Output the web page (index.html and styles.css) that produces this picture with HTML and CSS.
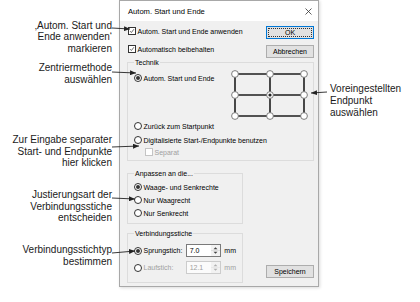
FILE: index.html
```html
<!DOCTYPE html>
<html lang="de">
<head>
    <meta charset="UTF-8">
    <title>Autom. Start und Ende</title>
    <link rel="stylesheet" href="styles.css">
</head>
<body>
    <div class="page">
        <div class="notes-left">
            <p class="note note-1">‚Autom. Start und<br>Ende anwenden‘<br>markieren</p>
            <p class="note note-2">Zentriermethode<br>auswählen</p>
            <p class="note note-3">Zur Eingabe separater<br>Start- und Endpunkte<br>hier klicken</p>
            <p class="note note-4">Justierungsart der<br>Verbindungsstiche<br>entscheiden</p>
            <p class="note note-5">Verbindungsstichtyp<br>bestimmen</p>
        </div>

        <div class="dialog">
            <div class="titlebar">
                <span>Autom. Start und Ende</span>
                <svg class="close" viewBox="0 0 7 7" width="7" height="7"><path d="M0.5 0.5L6.5 6.5M6.5 0.5L0.5 6.5" stroke="#333" stroke-width="0.8"/></svg>
            </div>

            <div class="dialog-body">
                <div class="top">
                    <div class="options">
                        <div class="row"><span class="check on"><svg viewBox="0 0 8 8"><path d="M1.4 4.2L3.2 6L6.6 1.6" fill="none" stroke="#222" stroke-width="0.9"/></svg></span>Autom. Start und Ende anwenden</div>
                        <div class="row"><span class="check on"><svg viewBox="0 0 8 8"><path d="M1.4 4.2L3.2 6L6.6 1.6" fill="none" stroke="#222" stroke-width="0.9"/></svg></span>Automatisch beibehalten</div>
                    </div>
                    <div class="actions">
                        <button class="btn btn-default">OK</button>
                        <button class="btn">Abbrechen</button>
                    </div>
                </div>

                <fieldset class="group technik">
                    <legend>Technik</legend>
                    <div class="technik-head">
                        <div class="row"><span class="radio on"></span>Autom. Start und Ende</div>
                        <svg class="grid" viewBox="0 0 78 50" width="78" height="50">
                            <path d="M4 4H73M4 25H73M4 46H73M4 4V46M39 4V46M73 4V46" fill="none" stroke="#1e1e1e" stroke-width="1.6"/>
                            <g fill="#fff" stroke="#6e6e6e" stroke-width="0.9">
                                <circle cx="4" cy="4" r="3.4"/>
                                <circle cx="39" cy="4" r="3.4"/>
                                <circle cx="73" cy="4" r="3.4"/>
                                <circle cx="4" cy="25" r="3.4"/>
                                <circle cx="39" cy="25" r="3.4"/>
                                <circle cx="73" cy="25" r="3.4"/>
                                <circle cx="4" cy="46" r="3.4"/>
                                <circle cx="39" cy="46" r="3.4"/>
                                <circle cx="73" cy="46" r="3.4"/>
                            </g>
                            <circle cx="39" cy="25" r="1.6" fill="#222"/>
                        </svg>
                    </div>
                    <div class="row">
                        <span class="radio"></span>Zurück zum Startpunkt
                    </div>
                    <div class="row spaced">
                        <span class="radio"></span>Digitalisierte Start-/Endpunkte benutzen
                    </div>
                    <div class="row sub disabled">
                        <span class="check off"></span>Separat
                    </div>
                </fieldset>

                <div class="bottom">
                    <div class="groups">
                        <fieldset class="group anpassen">
                            <legend>Anpassen an die...</legend>
                            <div class="stack">
                                <div class="row"><span class="radio on"></span>Waage- und Senkrechte</div>
                                <div class="row"><span class="radio"></span>Nur Waagrecht</div>
                                <div class="row"><span class="radio"></span>Nur Senkrecht</div>
                            </div>
                        </fieldset>

                        <fieldset class="group stiche">
                            <legend>Verbindungsstiche</legend>
                            <div class="field-row">
                                <span class="radio on"></span>
                                <span class="field-label">Sprungstich:</span>
                                <span class="spin">
                                    <span class="spin-value">7.0</span>
                                    <span class="spin-buttons">
                                        <svg viewBox="0 0 9 11"><path d="M2.5 4.2L4.5 2.2L6.5 4.2Z" fill="#444"/><path d="M2.5 6.8L4.5 8.8L6.5 6.8Z" fill="#444"/><path d="M0 5.5H9" stroke="#d0d0d0" stroke-width="0.6"/></svg>
                                    </span>
                                </span>
                                <span class="unit">mm</span>
                            </div>
                            <div class="field-row disabled">
                                <span class="radio"></span>
                                <span class="field-label">Laufstich:</span>
                                <span class="spin">
                                    <span class="spin-value">12.1</span>
                                    <span class="spin-buttons">
                                        <svg viewBox="0 0 9 11"><path d="M2.5 4.2L4.5 2.2L6.5 4.2Z" fill="#b0b0b0"/><path d="M2.5 6.8L4.5 8.8L6.5 6.8Z" fill="#b0b0b0"/><path d="M0 5.5H9" stroke="#e0e0e0" stroke-width="0.6"/></svg>
                                    </span>
                                </span>
                                <span class="unit">mm</span>
                            </div>
                        </fieldset>
                    </div>
                    <div class="save">
                        <button class="btn">Speichern</button>
                    </div>
                </div>
            </div>
        </div>

        <div class="notes-right">
            <p class="note note-6">Voreingestellten<br>Endpunkt<br>auswählen</p>
        </div>

        <!-- Pfeile von den Hinweisen zu den Steuerelementen -->
        <svg class="arrows" viewBox="0 0 420 302" width="420" height="302">
            <defs>
                <marker id="head" markerWidth="6" markerHeight="5" refX="6" refY="2.5" orient="auto" markerUnits="userSpaceOnUse">
                    <path d="M0 0L6 2.5L0 5Z" fill="#222"/>
                </marker>
            </defs>
            <g stroke="#222" stroke-width="0.9" marker-end="url(#head)">
                <path d="M112 28L130 29"/>
                <path d="M112 72L136 73"/>
                <path d="M112 147L139 146"/>
                <path d="M112 198L135 199"/>
                <path d="M112 253L135 251"/>
                <path d="M327 92L311 93"/>
            </g>
        </svg>
    </div>
</body>
</html>
```

FILE: styles.css
```css
* {
    box-sizing: border-box;
}

body {
    margin: 0;
    background-color: #fff;
    font-family: 'Liberation Sans', Arial, sans-serif;
}

.page {
    position: relative;
    width: 420px;
    height: 302px;
    display: flex;
    align-items: flex-start;
}

/* Hinweise */
.notes-left {
    width: 112px;
    text-align: right;
}

.note {
    margin: 0;
    font-size: 10px;
    line-height: 11.5px;
    color: #1a1a1a;
}

.note-1 { margin-top: 19.5px; }
.note-2 { margin-top: 8px; }
.note-3 { margin-top: 49px; }
.note-4 { margin-top: 20.5px; }
.note-5 { margin-top: 20.5px; }

.notes-right {
    margin-left: 11px;
    padding-top: 83px;
}

.note-6 {
    line-height: 12px;
}

.arrows {
    position: absolute;
    left: 0;
    top: 0;
    pointer-events: none;
}

/* Dialog */
.dialog {
    width: 200px;
    margin-left: 7px;
    border: 1px solid #a8a8a8;
    background-color: #f0f0f0;
    box-shadow: 1px 1px 3px rgba(0, 0, 0, 0.15);
    font-size: 7px;
    color: #000;
}

.titlebar {
    height: 20px;
    background-color: #fff;
    display: flex;
    align-items: center;
    justify-content: space-between;
    padding: 0 6px 0 8px;
    font-size: 7.6px;
}

.dialog-body {
    padding: 0 4px 3px 7px;
}

.top {
    display: flex;
    justify-content: space-between;
    height: 37px;
}

.options {
    padding-top: 4px;
    padding-left: 1px;
    display: flex;
    flex-direction: column;
    gap: 6px;
}

.actions {
    padding-top: 5px;
    display: flex;
    flex-direction: column;
    gap: 6px;
}

.row {
    display: flex;
    align-items: center;
    gap: 1.5px;
    height: 12px;
    white-space: nowrap;
}

.btn {
    width: 48px;
    height: 13px;
    padding: 0;
    background-color: #e1e1e1;
    border: 1px solid #adadad;
    font-family: inherit;
    font-size: 7px;
    color: #000;
    display: flex;
    align-items: center;
    justify-content: center;
}

.btn-default {
    border-color: #0078d7;
    outline: 1px dotted #333;
    outline-offset: -3px;
}

.check {
    width: 8px;
    height: 8px;
    flex: none;
    border: 1px solid #333;
    background-color: #fff;
}

.check svg {
    display: block;
    width: 6px;
    height: 6px;
}

.check.off {
    border-color: #c4c4c4;
}

.radio {
    width: 8px;
    height: 8px;
    flex: none;
    border: 1px solid #333;
    border-radius: 50%;
    background-color: #fff;
    display: flex;
    align-items: center;
    justify-content: center;
}

.radio.on::after {
    content: '';
    width: 4px;
    height: 4px;
    border-radius: 50%;
    background-color: #333;
}

.disabled {
    color: #a0a0a0;
}

/* Gruppen */
.group {
    margin: 0;
    padding: 0 6px 3px 6px;
    border: 1px solid #dcdcdc;
    min-width: 0;
}

.group legend {
    padding: 0 1px;
    font-size: 7px;
    line-height: 9px;
}

.technik-head {
    display: flex;
    justify-content: space-between;
    align-items: flex-start;
    margin-top: 3px;
}

.technik-head .row {
    margin-top: 2px;
}

.grid {
    display: block;
    margin-right: -2px;
}

.spaced {
    margin-top: 2px;
}

.sub {
    margin-top: 1px;
    height: 10px;
    padding-left: 11px;
}

.bottom {
    display: flex;
}

.groups {
    width: 116px;
}

.anpassen {
    margin-top: 8px;
    padding-bottom: 4px;
}

.stack {
    margin-top: 3px;
    display: flex;
    flex-direction: column;
    gap: 1px;
}

.stiche {
    margin-top: 5px;
    padding-bottom: 8px;
}

.field-row {
    display: flex;
    align-items: center;
    height: 13px;
    margin-top: 6px;
    white-space: nowrap;
}

.field-row + .field-row {
    margin-top: 4px;
}

.field-label {
    width: 42.5px;
    margin-left: 1.5px;
}

.spin {
    display: flex;
    width: 36px;
    height: 13px;
    border: 1px solid #7a7a7a;
    background-color: #fff;
}

.spin-value {
    flex: 1;
    padding-left: 3px;
    display: flex;
    align-items: center;
}

.spin-buttons {
    width: 9px;
    background-color: #f2f2f2;
}

.spin-buttons svg {
    display: block;
    width: 9px;
    height: 11px;
}

.field-row.disabled .spin {
    border-color: #cccccc;
    background-color: #fbfbfb;
}

.unit {
    margin-left: 3px;
}

.save {
    flex: 1;
    display: flex;
    justify-content: flex-end;
    align-items: flex-end;
    padding-bottom: 5px;
}
```
